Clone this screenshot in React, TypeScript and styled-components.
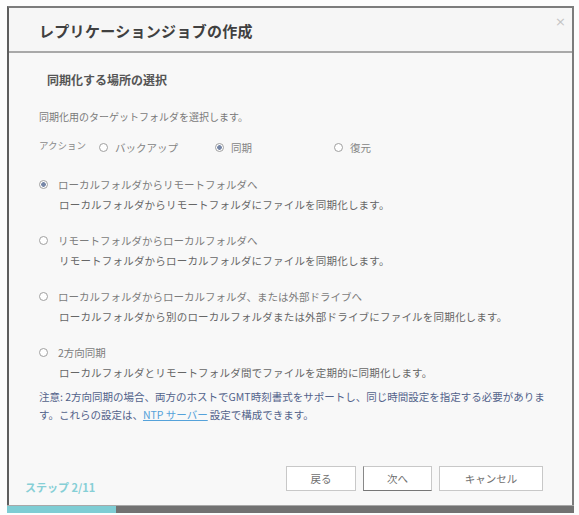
import { styled, createGlobalStyle } from 'styled-components';

const GlobalStyle = createGlobalStyle`
  html, body {
    margin: 0;
    padding: 0;
    background: #fdfdfd;
  }
  body {
    font-family: 'Noto Sans CJK JP', 'Noto Sans', sans-serif;
  }
`;

interface RadioProps {
  $checked?: boolean
}

const options = [
  {
    label: 'ローカルフォルダからリモートフォルダへ',
    desc: 'ローカルフォルダからリモートフォルダにファイルを同期化します。',
    checked: true,
  },
  {
    label: 'リモートフォルダからローカルフォルダへ',
    desc: 'リモートフォルダからローカルフォルダにファイルを同期化します。',
    checked: false,
  },
  {
    label: 'ローカルフォルダからローカルフォルダ、または外部ドライブへ',
    desc: 'ローカルフォルダから別のローカルフォルダまたは外部ドライブにファイルを同期化します。',
    checked: false,
  },
  {
    label: '2方向同期',
    desc: 'ローカルフォルダとリモートフォルダ間でファイルを定期的に同期化します。',
    checked: false,
  },
];

export default function App() {
  return (
    <>
      <GlobalStyle />
      <Dialog>
        <Header>
          <Title>レプリケーションジョブの作成</Title>
          <Close>×</Close>
        </Header>
        <Body>
          <SectionTitle>同期化する場所の選択</SectionTitle>
          <Intro>同期化用のターゲットフォルダを選択します。</Intro>
          <ActionRow>
            <ActionLabel>アクション</ActionLabel>
            <Choice>
              <Radio />
              バックアップ
            </Choice>
            <Choice>
              <Radio $checked />
              同期
            </Choice>
            <Choice>
              <Radio />
              復元
            </Choice>
          </ActionRow>
          <OptionList>
            {options.map((o) => (
              <Option key={o.label}>
                <OptionLabel>
                  <Radio $checked={o.checked} />
                  {o.label}
                </OptionLabel>
                <OptionDesc>{o.desc}</OptionDesc>
              </Option>
            ))}
          </OptionList>
          <Note>
            注意: 2方向同期の場合、両方のホストでGMT時刻書式をサポートし、同じ時間設定を指定する必要がありま
            <br />
            す。これらの設定は、<NoteLink>NTP サーバー</NoteLink>設定で構成できます。
          </Note>
        </Body>
        <Footer>
          <Step>ステップ 2/11</Step>
          <Buttons>
            <Button $w={70}>戻る</Button>
            <Button $w={69} $focus>次へ</Button>
            <Button $w={104}>キャンセル</Button>
          </Buttons>
        </Footer>
        <Progress>
          <ProgressFill style={{ width: `${(2 / 11) * 100 + 1}%` }} />
        </Progress>
      </Dialog>
    </>
  )
}

const Dialog = styled.div`
  margin: 6px 0 0 7px;
  width: 567px;
  height: 507px;
  box-sizing: border-box;
  border: 2px solid #7c7c7c;
  border-left-color: #5e5e5e;
  border-bottom: none;
  background: #f8f8f8;
  display: flex;
  flex-direction: column;
`;

const Header = styled.div`
  height: 41px;
  flex-shrink: 0;
  background: #f6f6f6;
  border-bottom: 2px solid #a9a9a9;
  display: flex;
  align-items: center;
  justify-content: space-between;
  padding: 2px 0 0 30px;
  box-sizing: content-box;
`;

const Title = styled.div`
  font-size: 15px;
  font-weight: 700;
  color: #404040;
  letter-spacing: 0.3px;
`;

const Close = styled.div`
  align-self: flex-start;
  margin: 4px 6px 0 0;
  font-family: 'DejaVu Sans', sans-serif;
  font-size: 13px;
  color: #c4c4c4;
  line-height: 16px;
`;

const Body = styled.div`
  flex: 1;
  padding: 0 29px 0 30px;
  display: flex;
  flex-direction: column;
`;

const SectionTitle = styled.div`
  margin: 19px 0 0 8px;
  font-size: 12px;
  line-height: 16px;
  font-weight: 700;
  color: #555;
`;

const Intro = styled.div`
  margin-top: 22px;
  font-size: 10px;
  line-height: 14px;
  color: #7a7a7a;
`;

const ActionRow = styled.div`
  margin-top: 15px;
  height: 16px;
  display: grid;
  grid-template-columns: 60px 116px 119px auto;
  align-items: center;
  font-size: 10.5px;
  color: #858585;
`;

const ActionLabel = styled.div`
  font-size: 9.5px;
  margin-top: -4px;
  color: #8a8a8a;
`;

const Choice = styled.div`
  display: flex;
  align-items: center;
  gap: 7px;
`;

const Radio = styled.span<RadioProps>`
  width: 9px;
  height: 9px;
  flex-shrink: 0;
  border-radius: 50%;
  border: 1px solid #a0a0a0;
  box-sizing: border-box;
  background: ${(p) => (p.$checked ? 'radial-gradient(circle, #7686a6 0 2px, #fff 2.6px)' : '#fff')};
`;

const OptionList = styled.div`
  margin-top: 21px;
  display: flex;
  flex-direction: column;
  gap: 20px;
`;

const Option = styled.div`
  display: flex;
  flex-direction: column;
  gap: 6px;
`;

const OptionLabel = styled.div`
  height: 16px;
  display: flex;
  align-items: center;
  gap: 10px;
  font-size: 10.5px;
  color: #7c7c7c;
`;

const OptionDesc = styled.div`
  margin-left: 20px;
  font-size: 10.5px;
  line-height: 14px;
  color: #666;
  letter-spacing: 0.2px;
`;

const Note = styled.div`
  margin-top: 8px;
  font-size: 10.5px;
  line-height: 18px;
  color: #52628a;
  white-space: nowrap;
`;

const NoteLink = styled.span`
  color: #55a2da;
  text-decoration: underline;
  margin-right: 2px;
`;

const Footer = styled.div`
  display: flex;
  justify-content: space-between;
  align-items: flex-end;
  padding: 0 29px 11px 16px;
`;

const Step = styled.div`
  font-size: 11px;
  line-height: 14px;
  font-weight: 700;
  color: #86cfd6;
`;

const Buttons = styled.div`
  display: flex;
  gap: 7px;
  margin-bottom: 3px;
`;

const Button = styled.button<{ $w: number; $focus?: boolean }>`
  width: ${(p) => p.$w}px;
  height: 25px;
  padding: 0;
  background: #fff;
  border: 1px solid #c8c8c8;
  border-bottom-color: ${(p) => (p.$focus ? '#777' : '#c8c8c8')};
  border-left-color: ${(p) => (p.$focus ? '#888' : '#c8c8c8')};
  font-family: 'Noto Sans CJK JP', sans-serif;
  font-size: 10.5px;
  color: #707070;
`;

const Progress = styled.div`
  height: 7px;
  flex-shrink: 0;
  margin: 0 -2px;
  background: #727272;
  border-top: 1px solid #a8a8a8;
`;

const ProgressFill = styled.div`
  height: 100%;
  background: #7ecdd4;
`;
